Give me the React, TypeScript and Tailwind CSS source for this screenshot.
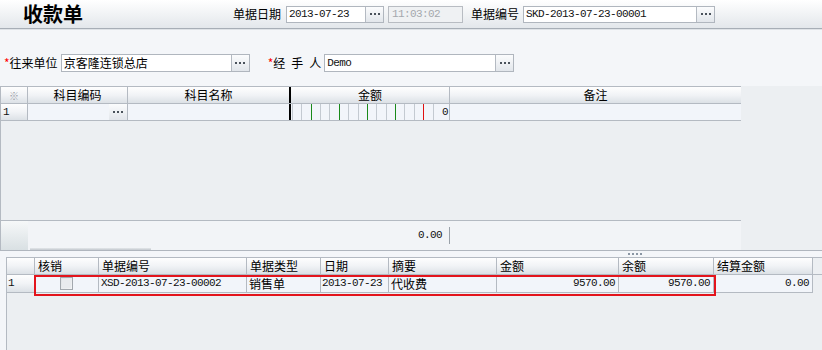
import React from 'react';

const cjk = "font-['Noto_Sans_CJK_SC',sans-serif]";
const mono = "font-['Liberation_Mono','Noto_Sans_CJK_SC',monospace] text-[11px] tracking-[-0.6px] text-[#111]";

function Dots({ border = true }: { border?: boolean }) {
  return (
    <div
      className={`flex h-full w-[18px] shrink-0 items-center justify-center gap-[2px] bg-gradient-to-b from-[#fbfcfd] to-[#e2e6eb] ${
        border ? 'border-l border-[#b4bac2]' : ''
      }`}
    >
      <span className="h-[2px] w-[2px] bg-[#4a525b]" />
      <span className="h-[2px] w-[2px] bg-[#4a525b]" />
      <span className="h-[2px] w-[2px] bg-[#4a525b]" />
    </div>
  );
}

const hdr = 'bg-gradient-to-b from-[#fefefe] via-[#f1f3f6] to-[#dce1e6]';

const amountLines = [
  'gray', 'gray', 'green', 'gray', 'gray', 'green', 'gray', 'gray',
  'green', 'gray', 'gray', 'green', 'gray', 'gray', 'red', 'gray',
];

const cols2 = [
  { label: '', w: 'w-[28px]' },
  { label: '核销', w: 'w-[64px]' },
  { label: '单据编号', w: 'w-[148px]' },
  { label: '单据类型', w: 'w-[74px]' },
  { label: '日期', w: 'w-[68px]' },
  { label: '摘要', w: 'w-[108px]' },
  { label: '金额', w: 'w-[122px]' },
  { label: '余额', w: 'w-[95px]' },
  { label: '结算金额', w: 'w-[99px]' },
];

export default function App() {
  return (
    <div className={`h-[350px] w-[822px] overflow-hidden bg-[#f4f6f9] text-[12px] text-black ${cjk}`}>
      {/* title bar */}
      <div className="flex h-[28px] items-center bg-gradient-to-b from-white to-[#e3e7eb] pl-[23px]">
        <div className="w-[210px] text-[20px] font-bold leading-none">收款单</div>
        <span className="mr-[5px]">单据日期</span>
        <div className="flex h-[17px] w-[98px] border border-[#b0b6be] bg-white">
          <div className={`flex-1 pl-[2px] leading-[15px] ${mono}`}>2013-07-23</div>
          <Dots />
        </div>
        <div className="ml-[4px] h-[17px] w-[75px] border border-[#b8bcc2] bg-[#eff1f3] pl-[3px] font-['Liberation_Mono',monospace] text-[11px] leading-[15px] tracking-[-0.6px] text-[#a4a8ad]">
          11:03:02
        </div>
        <span className="ml-[8px] mr-[4px]">单据编号</span>
        <div className="flex h-[17px] w-[192px] border border-[#b0b6be] bg-white">
          <div className={`flex-1 pl-[2px] leading-[15px] ${mono}`}>SKD-2013-07-23-00001</div>
          <Dots />
        </div>
      </div>
      <div className="h-[1px] bg-[#a7aeb6]" />
      <div className="h-[1px] bg-[#dfe3e7]" />

      {/* party row */}
      <div className="mt-[24px] flex h-[18px] items-center">
        <span className="ml-[4px] text-[#f00]">*</span>
        <span>往来单位</span>
        <div className="ml-[3px] flex h-[18px] w-[189px] border border-[#b0b6be] bg-white">
          <div className="flex-1 pl-[2px] leading-[16px]">京客隆连锁总店</div>
          <Dots />
        </div>
        <span className="ml-[18px] text-[#f00]">*</span>
        <span>经{'\u2002'}手{'\u2002'}人</span>
        <div className="ml-[3px] flex h-[18px] w-[190px] border border-[#b0b6be] bg-white">
          <div className={`flex-1 pl-[2px] leading-[16px] ${mono}`}>Demo</div>
          <Dots />
        </div>
      </div>

      {/* grid 1 */}
      <div className="mt-[14px] flex h-[164px] flex-col bg-[#eceff2]">
        <div className="flex h-[18px] w-[741px] border-l border-t border-b border-[#b4bac2]">
          <div className={`flex w-[27px] items-center justify-center border-r border-[#b4bac2] text-[10px] text-[#9aa0a6] ${hdr}`}>※</div>
          <div className={`flex w-[100px] items-center justify-center border-r border-[#b4bac2] ${hdr}`}>科目编码</div>
          <div className={`flex w-[161px] items-center justify-center ${hdr}`}>科目名称</div>
          <div className="w-[2px] bg-black" />
          <div className={`flex w-[159px] items-center justify-center border-r border-[#b4bac2] ${hdr}`}>金额</div>
          <div className={`flex flex-1 items-center justify-center ${hdr}`}>备注</div>
        </div>
        <div className="flex h-[17px] w-[741px] border-l border-b border-[#b4bac2] bg-[#f2f5fa]">
          <div className={`w-[27px] border-r border-[#b4bac2] pl-[2px] leading-[16px] ${mono} ${hdr}`}>1</div>
          <div className="flex w-[100px] justify-end border-r border-[#b4bac2]">
            <Dots border={false} />
          </div>
          <div className="w-[161px]" />
          <div className="w-[2px] bg-black" />
          <div className="flex w-[159px] border-r border-[#b4bac2]">
            <div className="w-[1px]" />
            {amountLines.map((c, i) => (
              <div
                key={i}
                className={`h-full w-[10px] border-l ${
                  c === 'green' ? 'border-[#1a8a1a]' : c === 'red' ? 'border-[#e01010]' : 'border-[#c4cad1]'
                }`}
              />
            ))}
            <div className={`flex-1 pr-[1px] text-right leading-[16px] ${mono}`}>0</div>
          </div>
          <div className="flex-1" />
        </div>
        <div className="flex-1 border-l border-[#b4bac2]" />
        <div className="relative flex h-[30px] w-[741px] border-l border-t border-[#b4bac2] bg-[#f2f4f7]">
          <div className="w-[27px] bg-gradient-to-b from-[#f6f8f9] to-[#d9e0e3]" />
          <div className="flex w-[421px] items-center justify-end pr-[7px]">
            <span className={mono}>0.00</span>
          </div>
          <div className="my-[6px] w-[1px] bg-[#9aa1a9]" />
          <div className="absolute bottom-0 left-[29px] h-[2px] w-[121px] bg-gradient-to-b from-[#e4e7ea] to-[#c4c9cf]" />
        </div>
      </div>
      <div className="h-[1px] bg-[#b0b6be]" />

      {/* splitter */}
      <div className="flex h-[6px] items-center">
        <div className="ml-[628px] flex gap-[2px]">
          <span className="h-[2px] w-[2px] bg-[#8a96a3]" />
          <span className="h-[2px] w-[2px] bg-[#8a96a3]" />
          <span className="h-[2px] w-[2px] bg-[#8a96a3]" />
          <span className="h-[2px] w-[2px] bg-[#8a96a3]" />
        </div>
      </div>

      {/* grid 2 */}
      <div className="ml-[6px] flex h-[200px] flex-col border-l border-[#b4bac2] bg-[#eceff2]">
        <div className="flex h-[18px] border-t border-b border-[#b4bac2]">
          {cols2.map((c, i) => (
            <div key={i} className={`${c.w} border-r border-[#b4bac2] pl-[3px] leading-[16px] ${hdr}`}>
              {c.label}
            </div>
          ))}
        </div>
        <div className="relative flex h-[18px]">
          <div className={`w-[28px] border-r border-b border-[#b4bac2] pl-[1px] leading-[17px] ${mono} ${hdr}`}>1</div>
          <div className="flex w-[64px] items-center justify-center border-r border-b border-[#b4bac2] bg-[#f2f5fa]">
            <div className="h-[13px] w-[13px] border border-[#a3a8ae] bg-gradient-to-br from-[#dfe2e5] to-[#f4f5f6] p-[1px]">
              <div className="h-full w-full bg-[#e9ebee]" />
            </div>
          </div>
          <div className={`w-[148px] border-r border-b border-[#b4bac2] bg-[#f2f5fa] pl-[2px] leading-[17px] ${mono}`}>XSD-2013-07-23-00002</div>
          <div className="w-[74px] border-r border-b border-[#b4bac2] bg-[#f2f5fa] pl-[2px] leading-[17px]">销售单</div>
          <div className={`w-[68px] border-r border-b border-[#b4bac2] bg-[#f2f5fa] pl-[1px] leading-[17px] ${mono}`}>2013-07-23</div>
          <div className="w-[108px] border-r border-b border-[#b4bac2] bg-[#f2f5fa] pl-[2px] leading-[17px]">代收费</div>
          <div className={`w-[122px] border-r border-b border-[#b4bac2] bg-[#f2f5fa] pr-[3px] text-right leading-[17px] ${mono}`}>9570.00</div>
          <div className={`w-[95px] border-r border-b border-[#b4bac2] bg-[#f2f5fa] pr-[3px] text-right leading-[17px] ${mono}`}>9570.00</div>
          <div className={`w-[99px] border-r border-b border-[#b4bac2] bg-[#f2f5fa] pr-[3px] text-right leading-[17px] ${mono}`}>0.00</div>
          <div className="pointer-events-none absolute left-[27px] top-0 h-[21px] w-[682px] border-2 border-[#e3141c]" />
        </div>
        <div className="flex-1" />
      </div>
    </div>
  );
}
